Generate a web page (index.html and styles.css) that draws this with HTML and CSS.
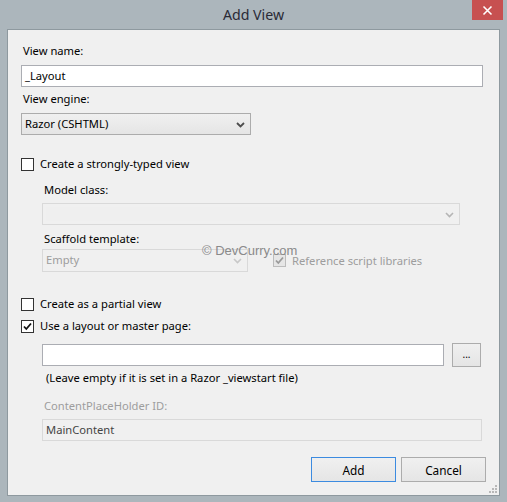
FILE: index.html
```html
<!DOCTYPE html>
<html>
<head>
<meta charset="utf-8">
<link rel="stylesheet" href="styles.css">
</head>
<body>
<div class="window">
  <div class="titlebar">
    <span class="title">Add View</span>
    <div class="close">
      <svg width="31" height="20" viewBox="0 0 31 20"><path d="M11.5 6.5 L19.5 14.5 M19.5 6.5 L11.5 14.5" stroke="#fff" stroke-width="1.6" fill="none"/></svg>
    </div>
  </div>
  <div class="client">
    <div class="label r-viewname">View name:</div>
    <div class="textbox wide r-tb1">_Layout</div>
    <div class="label r-engine">View engine:</div>
    <div class="combo r-combo1"><span>Razor (CSHTML)</span>
      <svg class="chev" width="9" height="6" viewBox="0 0 9 6"><path d="M1 1 L4.5 4.5 L8 1" stroke="#4d4d4d" stroke-width="1.8" fill="none"/></svg>
    </div>
    <div class="checkrow r-chk1"><span class="cb"></span><span>Create a strongly-typed view</span></div>
    <div class="indent">
      <div class="label r-model">Model class:</div>
      <div class="combo disabled model r-model-combo"><span class="inner"></span>
        <svg class="chev" width="9" height="6" viewBox="0 0 9 6"><path d="M1 1 L4.5 4.5 L8 1" stroke="#b5b5b5" stroke-width="1.6" fill="none"/></svg>
      </div>
      <div class="label r-scaffold">Scaffold template:</div>
      <div class="scaffold-row r-scaffold-row">
        <div class="combo disabled scaffold"><span class="gray">Empty</span>
          <svg class="chev" width="9" height="6" viewBox="0 0 9 6"><path d="M1 1 L4.5 4.5 L8 1" stroke="#c8c8c8" stroke-width="1.6" fill="none"/></svg>
        </div>
        <div class="checkrow ref"><span class="cb dis checked"><svg width="11" height="11" viewBox="0 0 11 11"><path d="M2 5.5 L4.3 8 L9 2.5" stroke="#9a9a9a" stroke-width="1.8" fill="none"/></svg></span><span class="gray">Reference script libraries</span></div>
      </div>
    </div>
    <div class="checkrow r-partial"><span class="cb"></span><span>Create as a partial view</span></div>
    <div class="checkrow r-layout"><span class="cb checked"><svg width="11" height="11" viewBox="0 0 11 11"><path d="M2 5.5 L4.3 8 L9 2.5" stroke="#111" stroke-width="1.8" fill="none"/></svg></span><span>Use a layout or master page:</span></div>
    <div class="indent">
      <div class="layout-row r-layout-row">
        <div class="textbox layoutbox"></div>
        <div class="button browse">...</div>
      </div>
      <div class="hint r-hint">(Leave empty if it is set in a Razor _viewstart file)</div>
      <div class="label gray r-cph">ContentPlaceHolder ID:</div>
      <div class="textbox readonly r-main">MainContent</div>
    </div>
    <div class="buttons r-buttons">
      <div class="button default">Add</div>
      <div class="button">Cancel</div>
    </div>
    <div class="watermark">© DevCurry.com</div>
    <svg class="grip" width="8" height="8" viewBox="0 0 8 8"><g fill="#b8b8b8"><rect x="6" y="0" width="2" height="2"/><rect x="3" y="3" width="2" height="2"/><rect x="6" y="3" width="2" height="2"/><rect x="0" y="6" width="2" height="2"/><rect x="3" y="6" width="2" height="2"/><rect x="6" y="6" width="2" height="2"/></g></svg>
  </div>
</div>
</body>
</html>
```
FILE: styles.css
```css
html, body {
  margin: 0;
  padding: 0;
  background: #acb6bc;
}
.window {
  width: 507px;
  height: 502px;
  background: #acb6bc;
  box-sizing: border-box;
  padding: 0 7px 6px 7px;
  font-family: "Noto Sans", "Open Sans", sans-serif;
  font-size: 11.2px;
  color: #000;
}
.titlebar {
  position: relative;
  height: 29px;
  display: flex;
  justify-content: center;
  align-items: center;
}
.title {
  font-size: 14.2px;
  color: #2a2a36;
}
.close {
  position: absolute;
  top: 0;
  right: -3px;
  width: 31px;
  height: 20px;
  background: #c75050;
}
.close svg { display: block; }
.client {
  position: relative;
  height: 467px;
  box-sizing: border-box;
  background: #f0f0f0;
  border: 1px solid #8e999f;
  padding: 13px 0 0 13px;
  display: flex;
  flex-direction: column;
  align-items: flex-start;
}
.label, .hint, .checkrow {
  line-height: 16px;
  height: 16px;
  white-space: nowrap;
}
.label { padding-left: 2px; }
.gray { color: #9d9d9d; }
.textbox {
  box-sizing: border-box;
  height: 22px;
  background: #fff;
  border: 1px solid #abadb3;
  line-height: 20px;
  padding-left: 3px;
}
.wide { width: 462px; }
.combo {
  position: relative;
  box-sizing: border-box;
  height: 22px;
  width: 230px;
  border: 1px solid #acacac;
  background: linear-gradient(#f0f0f0, #e5e5e5);
  line-height: 20px;
  padding-left: 3px;
}
.chev {
  position: absolute;
  right: 5px;
  top: 8px;
}
.combo.disabled {
  border-color: #d9d9d9;
  background: #f0f0f0;
}
.combo.model {
  width: 418px;
  padding: 0;
}
.combo.model .inner {
  position: absolute;
  left: 3px;
  top: 3px;
  width: 394px;
  height: 14px;
  background: #efefef;
}
.combo.scaffold {
  width: 206px;
  height: 23px;
}
.checkrow {
  display: flex;
  align-items: center;
  gap: 6px;
}
.cb {
  box-sizing: border-box;
  width: 13px;
  height: 13px;
  border: 1px solid #333;
  background: #fff;
  display: flex;
  align-items: center;
  justify-content: center;
}
.cb svg { display: block; }
.cb.dis {
  border-color: #bcbcbc;
  background: #e6e6e6;
}
.indent {
  margin-left: 21px;
  display: flex;
  flex-direction: column;
  align-items: flex-start;
}
.scaffold-row {
  display: flex;
  align-items: center;
  gap: 25px;
}
.layout-row {
  display: flex;
  align-items: center;
  gap: 8px;
}
.layoutbox { width: 402px; }
.button {
  box-sizing: border-box;
  height: 25px;
  border: 1px solid #acacac;
  background: linear-gradient(#f0f0f0, #e5e5e5);
  display: flex;
  align-items: center;
  justify-content: center;
  font-size: 11.8px;
}
.browse {
  width: 29px;
  height: 24px;
  font-size: 10px;
  padding-bottom: 3px;
}
.hint { padding-left: 4px; }
.readonly {
  width: 440px;
  background: #f0f0f0;
  border-color: #d9d9d9;
  color: #444;
}
.buttons {
  display: flex;
  gap: 5px;
  margin-left: 290px;
}
.buttons .button { width: 85px; }
.button.default { border-color: #3c8be0; }
.watermark {
  position: absolute;
  left: 194px;
  top: 213px;
  font-family: "Liberation Sans", Arial, sans-serif;
  font-size: 13px;
  color: #8a8a8a;
}
.grip {
  position: absolute;
  right: 2px;
  bottom: 2px;
}
/* vertical rhythm */
.r-tb1 { margin-top: 6px; }
.r-engine { margin-top: 4px; }
.r-combo1 { margin-top: 6px; }
.r-chk1 { margin-top: 21px; }
.r-model { margin-top: 10px; }
.r-model-combo { margin-top: 5px; }
.r-scaffold { margin-top: 6px; }
.r-scaffold-row { margin-top: 2px; }
.r-partial { margin-top: 24px; }
.r-layout { margin-top: 6px; }
.r-layout-row { margin-top: 9px; }
.r-hint { margin-top: 3px; }
.r-cph { margin-top: 12px; }
.r-main { margin-top: 5px; }
.r-buttons { margin-top: 16px; }
```
